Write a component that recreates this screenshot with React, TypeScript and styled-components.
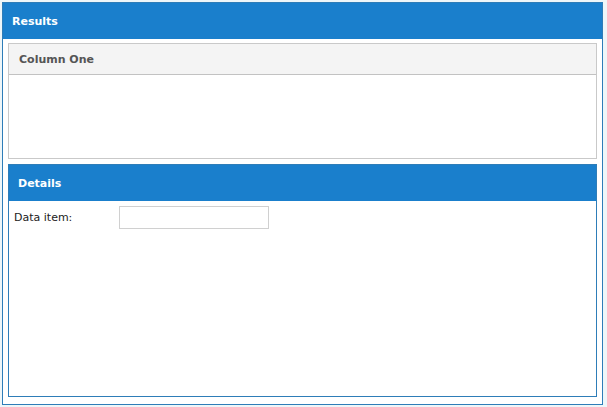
import React from "react";
import styled, { createGlobalStyle } from "styled-components";

const Global = createGlobalStyle`
  html, body { margin: 0; padding: 0; background: #eef6f9; }
  body { font-family: "DejaVu Sans", Verdana, sans-serif; }
  #root { width: 607px; height: 407px; }
`;

const Panel = styled.div`
  box-sizing: border-box;
  margin: 2px 4px 2px 2px;
  height: 403px;
  border: 1px solid #2e7db8;
  background: #ffffff;
  display: flex;
  flex-direction: column;
`;

const Header = styled.div<{ $pad?: number }>`
  box-sizing: border-box;
  height: 36px;
  background: #1a7fcc;
  color: #ffffff;
  font-weight: bold;
  font-size: 11px;
  display: flex;
  align-items: center;
  padding-left: ${(p) => p.$pad ?? 9}px;
  flex-shrink: 0;
`;

const Body = styled.div`
  flex: 1;
  display: flex;
  flex-direction: column;
  gap: 5px;
  padding: 4px 5px 7px 5px;
`;

const Grid = styled.div`
  box-sizing: border-box;
  height: 116px;
  border: 1px solid #c9c9c9;
  background: #fff;
`;

const GridHead = styled.div`
  box-sizing: border-box;
  height: 31px;
  background: #f4f4f4;
  border-bottom: 1px solid #c2c2c2;
  color: #555555;
  font-weight: bold;
  font-size: 11px;
  display: flex;
  align-items: center;
  padding-left: 10px;
`;

const Details = styled.div`
  box-sizing: border-box;
  flex: 1;
  border: 1px solid #2e7db8;
  display: flex;
  flex-direction: column;
`;

const Row = styled.div`
  display: flex;
  align-items: center;
  padding: 5px 5px;
`;

const Label = styled.span`
  width: 105px;
  font-size: 11px;
  color: #222;
`;

const Input = styled.input`
  box-sizing: border-box;
  width: 150px;
  height: 23px;
  border: 1px solid #d0d0d0;
  background: #fff;
  padding: 0;
`;

export default function App() {
  return (
    <>
      <Global />
      <Panel>
        <Header>Results</Header>
        <Body>
          <Grid>
            <GridHead>Column One</GridHead>
          </Grid>
          <Details>
            <Header $pad={9}>Details</Header>
            <Row>
              <Label>Data item:</Label>
              <Input type="text" />
            </Row>
          </Details>
        </Body>
      </Panel>
    </>
  );
}
